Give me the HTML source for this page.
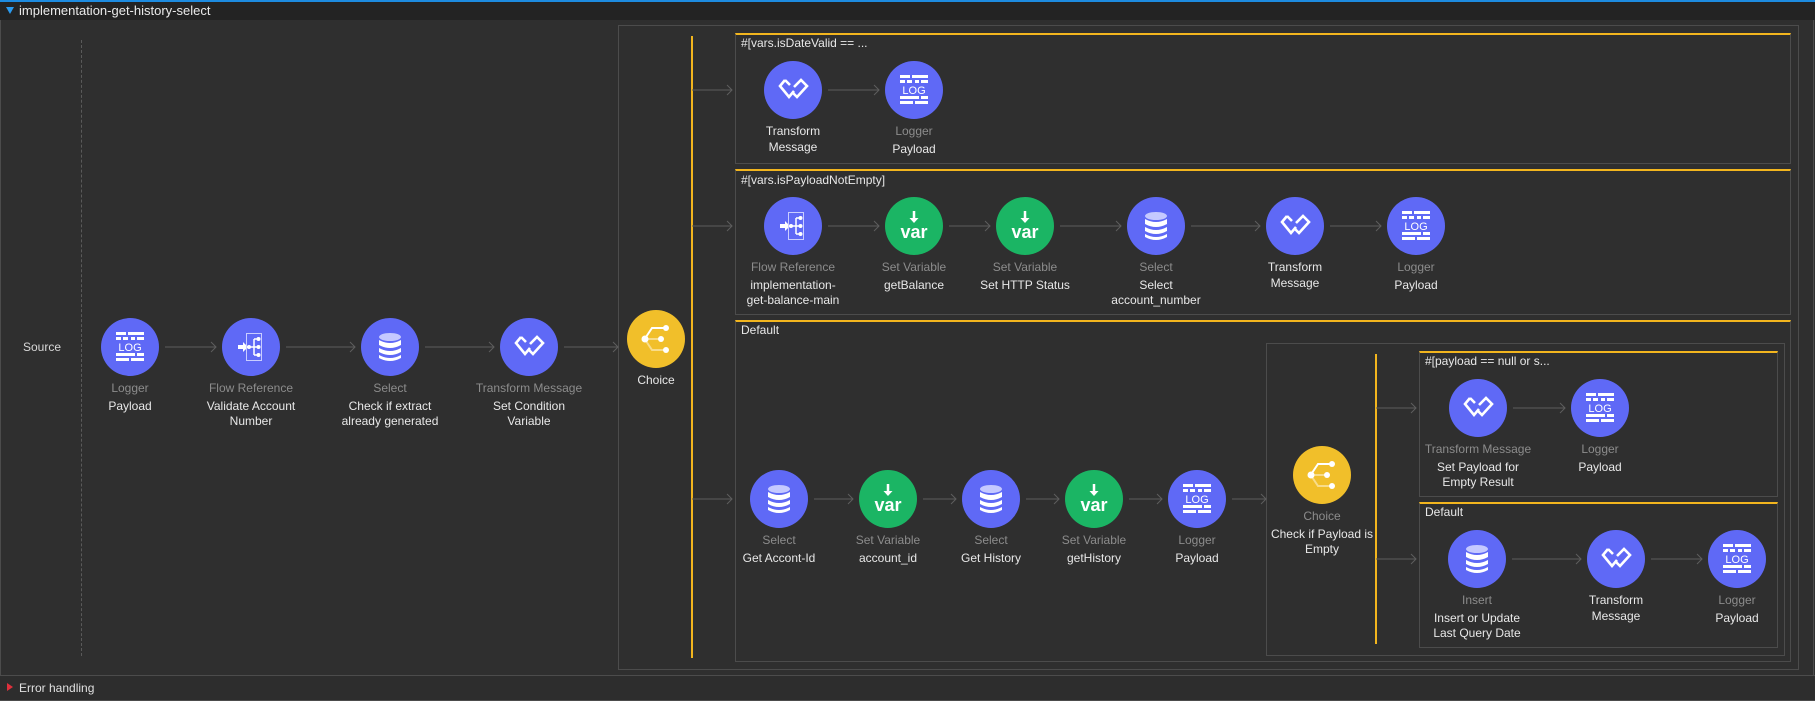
<!DOCTYPE html>
<html><head><meta charset="utf-8"><style>
*{margin:0;padding:0;box-sizing:border-box}
body{width:1815px;height:701px;background:#2f2f2f;position:relative;overflow:hidden;font-family:"Liberation Sans",sans-serif;font-size:12px;color:#e6e6e6}
.a{position:absolute}
.bx{position:absolute;border:1px solid #4c4c4c}
.rt{position:absolute;border:1px solid #4c4c4c;border-top:2px solid #f2b51e}
.rl{position:absolute;font-size:12px;color:#e8e8e8;white-space:nowrap}
.c{position:absolute;width:58px;height:58px;border-radius:50%;background:#5f69f6}
.g{background:#1bb564}.y{background:#f1bf2a}
.c svg{width:58px;height:58px;display:block}
.lb{position:absolute;width:170px;margin-left:-85px;text-align:center;line-height:15.5px;font-size:12px;color:#e8e8e8}
.lb .t{color:#8c8c8c;margin-bottom:2px}
.yl{position:absolute;width:2px;background:#f2b51e}
</style></head><body>
<svg width="0" height="0" style="position:absolute">
<defs>
<symbol id="log" viewBox="-29 -29 58 58"><g fill="#fff">
<rect x="-14" y="-15" width="10" height="3"/><rect x="-2" y="-15" width="16" height="3"/>
<rect x="-14" y="-10" width="5" height="3"/><rect x="-7" y="-10" width="5" height="3"/><rect x="1" y="-10" width="4" height="3"/><rect x="7" y="-10" width="7" height="3"/>
<rect x="-14" y="6" width="19" height="3"/><rect x="7" y="6" width="7" height="3"/>
<rect x="-14" y="11" width="13" height="3"/><rect x="1" y="11" width="13" height="3"/>
<text x="0" y="4" text-anchor="middle" font-family="Liberation Sans" font-size="11" fill="#fff">LOG</text></g></symbol>
<symbol id="flow" viewBox="-29 -29 58 58">
<path d="M-13,-2 h5 v-3 l5,5 l-5,5 v-3 h-5z" fill="#fff"/>
<rect x="-4.5" y="-13.5" width="15" height="27" fill="none" stroke="#c9cdff" stroke-width="1"/>
<path d="M-2,0 H3 M3,-8 V8 M3,-8 H7 M3,0 H7 M3,8 H7" stroke="#fff" stroke-width="1.5" fill="none"/>
<circle cx="-2" cy="0" r="2" fill="#fff"/><circle cx="7.5" cy="-8" r="2" fill="#fff"/><circle cx="7.5" cy="0" r="2" fill="#fff"/><circle cx="7.5" cy="8" r="2" fill="#fff"/></symbol>
<symbol id="db" viewBox="-29 -29 58 58">
<ellipse cx="0" cy="-10" rx="11" ry="4" fill="#c5c9ff"/>
<path d="M-11,-7 Q0,-1 11,-7 V-2 Q0,4 -11,-2Z M-11,1 Q0,7 11,1 V5 Q0,11 -11,5Z M-11,8 Q0,14 11,8 V11 Q0,17 -11,11Z" fill="#fff"/></symbol>
<symbol id="tm" viewBox="-29 -29 58 58">
<path d="M-8,-10 L-13,-4 L-4,7 L1,1 M-8,-10 L-3,-5" fill="none" stroke="#fff" stroke-width="2.6" stroke-linejoin="miter"/>
<path d="M1,-3 L8,-10 L14,-4 L4,7 L0,3" fill="none" stroke="#fff" stroke-width="2.6" stroke-linejoin="miter"/></symbol>
<symbol id="var" viewBox="-29 -29 58 58">
<path d="M0,-15 V-7" stroke="#fff" stroke-width="2.5"/><path d="M-4.5,-8 L0,-3 L4.5,-8Z" fill="#fff"/>
<text x="0" y="12" text-anchor="middle" font-family="Liberation Sans" font-weight="bold" font-size="18" fill="#fff">var</text></symbol>
<symbol id="ch" viewBox="-29 -29 58 58">
<path d="M-11,0 H5" stroke="#f8dc8a" stroke-width="2"/>
<path d="M-10,-2 L-4,-11 H10" fill="none" stroke="#fff" stroke-width="2"/>
<path d="M-10,2 L-4,11 H10" fill="none" stroke="#f8dc8a" stroke-width="2"/>
<circle cx="-11" cy="0" r="3.5" fill="#fff"/><circle cx="5" cy="0" r="3" fill="#fff"/><circle cx="10" cy="-11" r="3" fill="#fff"/><circle cx="10" cy="11" r="3" fill="#fff"/></symbol>
</defs></svg>

<div class="a" style="left:0;top:0;width:1815px;height:2px;background:#1d8be0"></div>
<div class="a" style="left:0;top:2px;width:1815px;height:18px;background:#232323"></div>
<div class="a" style="left:6px;top:7px;width:0;height:0;border-left:4px solid transparent;border-right:4px solid transparent;border-top:7px solid #2a9bf0"></div>
<div class="a" style="left:19px;top:3px;font-size:13px;color:#eaeaea">implementation-get-history-select</div>
<div class="a" style="left:0;top:20px;width:1px;height:655px;background:#4c4c4c"></div>
<div class="a" style="left:1813px;top:20px;width:1px;height:655px;background:#4c4c4c"></div>

<div class="a" style="left:23px;top:340px;color:#d8d8d8">Source</div>
<div class="a" style="left:81px;top:40px;height:616px;border-left:1px dashed #5a5a5a"></div>

<div class="bx" style="left:618px;top:25px;width:1181px;height:645px"></div>
<div class="yl" style="left:691px;top:36px;height:622px"></div>
<div class="rt" style="left:735px;top:33px;width:1056px;height:131px"></div>
<div class="rl" style="left:741px;top:36px">#[vars.isDateValid == ...</div>
<div class="rt" style="left:735px;top:169px;width:1056px;height:146px"></div>
<div class="rl" style="left:741px;top:173px">#[vars.isPayloadNotEmpty]</div>
<div class="rt" style="left:735px;top:320px;width:1056px;height:342px"></div>
<div class="rl" style="left:741px;top:323px">Default</div>
<div class="bx" style="left:1266px;top:343px;width:519px;height:313px"></div>
<div class="yl" style="left:1375px;top:354px;height:290px"></div>
<div class="rt" style="left:1419px;top:351px;width:359px;height:146px"></div>
<div class="rl" style="left:1425px;top:354px">#[payload == null or s...</div>
<div class="rt" style="left:1419px;top:502px;width:359px;height:146px"></div>
<div class="rl" style="left:1425px;top:505px">Default</div>

<div class="a" style="left:0;top:675px;width:1815px;height:26px;background:#2d2d2d;border-top:1px solid #4c4c4c;border-bottom:1px solid #4c4c4c"></div>
<div class="a" style="left:7px;top:683px;width:0;height:0;border-top:4px solid transparent;border-bottom:4px solid transparent;border-left:6px solid #e0303c"></div>
<div class="a" style="left:19px;top:681px;color:#e0e0e0">Error handling</div>

<svg class="a" style="left:0;top:0" width="1815" height="701"><g stroke="#5e5e5e" stroke-width="1" fill="none">
<path d="M165,347H216M286,347H355M425,347H494M564,347H618"/>
<path d="M692,90H732M692,226H732M692,499H732"/>
<path d="M828,90H879"/>
<path d="M828,226H879M949,226H990M1060,226H1121M1191,226H1260M1330,226H1381"/>
<path d="M814,499H853M923,499H956M1026,499H1059M1129,499H1162M1232,499H1266"/>
<path d="M1376,408H1416M1376,559H1416M1513,408H1565M1512,559H1581M1651,559H1702"/>
<path d="M211,342l5,5l-5,5M350,342l5,5l-5,5M489,342l5,5l-5,5M613,342l5,5l-5,5M727,85l5,5l-5,5M727,221l5,5l-5,5M727,494l5,5l-5,5M874,85l5,5l-5,5M874,221l5,5l-5,5M985,221l5,5l-5,5M1116,221l5,5l-5,5M1255,221l5,5l-5,5M1376,221l5,5l-5,5M848,494l5,5l-5,5M951,494l5,5l-5,5M1054,494l5,5l-5,5M1157,494l5,5l-5,5M1261,494l5,5l-5,5M1411,403l5,5l-5,5M1411,554l5,5l-5,5M1560,403l5,5l-5,5M1576,554l5,5l-5,5M1697,554l5,5l-5,5"/>
</g></svg>

<div class="c" style="left:101px;top:318px"><svg><use href="#log"/></svg></div>
<div class="lb" style="left:130px;top:381px"><div class="t">Logger</div>Payload</div>
<div class="c" style="left:222px;top:318px"><svg><use href="#flow"/></svg></div>
<div class="lb" style="left:251px;top:381px"><div class="t">Flow Reference</div>Validate Account<br>Number</div>
<div class="c" style="left:361px;top:318px"><svg><use href="#db"/></svg></div>
<div class="lb" style="left:390px;top:381px"><div class="t">Select</div>Check if extract<br>already generated</div>
<div class="c" style="left:500px;top:318px"><svg><use href="#tm"/></svg></div>
<div class="lb" style="left:529px;top:381px"><div class="t">Transform Message</div>Set Condition<br>Variable</div>
<div class="c y" style="left:627px;top:310px"><svg><use href="#ch"/></svg></div>
<div class="lb" style="left:656px;top:373px">Choice</div>

<div class="c" style="left:764px;top:61px"><svg><use href="#tm"/></svg></div>
<div class="lb" style="left:793px;top:124px">Transform<br>Message</div>
<div class="c" style="left:885px;top:61px"><svg><use href="#log"/></svg></div>
<div class="lb" style="left:914px;top:124px"><div class="t">Logger</div>Payload</div>

<div class="c" style="left:764px;top:197px"><svg><use href="#flow"/></svg></div>
<div class="lb" style="left:793px;top:260px"><div class="t">Flow Reference</div>implementation-<br>get-balance-main</div>
<div class="c g" style="left:885px;top:197px"><svg><use href="#var"/></svg></div>
<div class="lb" style="left:914px;top:260px"><div class="t">Set Variable</div>getBalance</div>
<div class="c g" style="left:996px;top:197px"><svg><use href="#var"/></svg></div>
<div class="lb" style="left:1025px;top:260px"><div class="t">Set Variable</div>Set HTTP Status</div>
<div class="c" style="left:1127px;top:197px"><svg><use href="#db"/></svg></div>
<div class="lb" style="left:1156px;top:260px"><div class="t">Select</div>Select<br>account_number</div>
<div class="c" style="left:1266px;top:197px"><svg><use href="#tm"/></svg></div>
<div class="lb" style="left:1295px;top:260px">Transform<br>Message</div>
<div class="c" style="left:1387px;top:197px"><svg><use href="#log"/></svg></div>
<div class="lb" style="left:1416px;top:260px"><div class="t">Logger</div>Payload</div>

<div class="c" style="left:750px;top:470px"><svg><use href="#db"/></svg></div>
<div class="lb" style="left:779px;top:533px"><div class="t">Select</div>Get Accont-Id</div>
<div class="c g" style="left:859px;top:470px"><svg><use href="#var"/></svg></div>
<div class="lb" style="left:888px;top:533px"><div class="t">Set Variable</div>account_id</div>
<div class="c" style="left:962px;top:470px"><svg><use href="#db"/></svg></div>
<div class="lb" style="left:991px;top:533px"><div class="t">Select</div>Get History</div>
<div class="c g" style="left:1065px;top:470px"><svg><use href="#var"/></svg></div>
<div class="lb" style="left:1094px;top:533px"><div class="t">Set Variable</div>getHistory</div>
<div class="c" style="left:1168px;top:470px"><svg><use href="#log"/></svg></div>
<div class="lb" style="left:1197px;top:533px"><div class="t">Logger</div>Payload</div>
<div class="c y" style="left:1293px;top:446px"><svg><use href="#ch"/></svg></div>
<div class="lb" style="left:1322px;top:509px"><div class="t">Choice</div>Check if Payload is<br>Empty</div>

<div class="c" style="left:1449px;top:379px"><svg><use href="#tm"/></svg></div>
<div class="lb" style="left:1478px;top:442px"><div class="t">Transform Message</div>Set Payload for<br>Empty Result</div>
<div class="c" style="left:1571px;top:379px"><svg><use href="#log"/></svg></div>
<div class="lb" style="left:1600px;top:442px"><div class="t">Logger</div>Payload</div>
<div class="c" style="left:1448px;top:530px"><svg><use href="#db"/></svg></div>
<div class="lb" style="left:1477px;top:593px"><div class="t">Insert</div>Insert or Update<br>Last Query Date</div>
<div class="c" style="left:1587px;top:530px"><svg><use href="#tm"/></svg></div>
<div class="lb" style="left:1616px;top:593px">Transform<br>Message</div>
<div class="c" style="left:1708px;top:530px"><svg><use href="#log"/></svg></div>
<div class="lb" style="left:1737px;top:593px"><div class="t">Logger</div>Payload</div>
</body></html>
